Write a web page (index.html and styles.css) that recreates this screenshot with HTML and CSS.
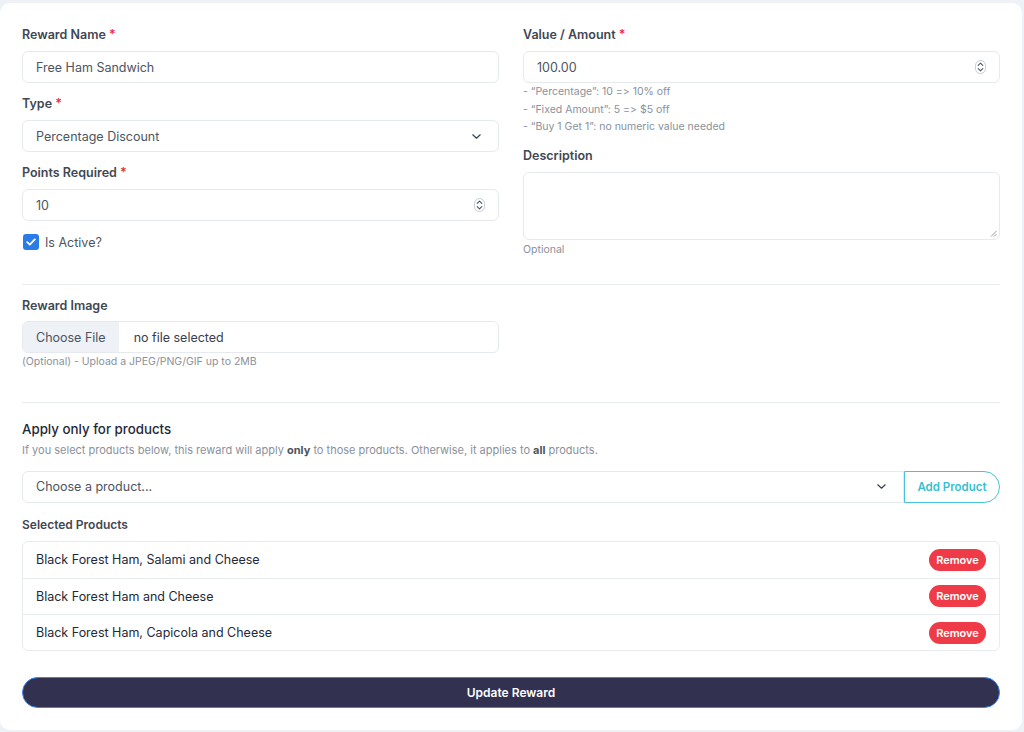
FILE: index.html
```html
<!DOCTYPE html>
<html lang="en">
<head>
<meta charset="utf-8">
<title>Edit Reward</title>
<link rel="stylesheet" href="styles.css">
</head>
<body>
<main class="card">
  <div class="grid">
    <div class="col">
      <div class="field">
        <label class="label">Reward Name <span class="req">*</span></label>
        <div class="input"><span class="value">Free Ham Sandwich</span></div>
      </div>
      <div class="field">
        <label class="label">Type <span class="req">*</span></label>
        <div class="input">
          <span class="value">Percentage Discount</span>
          <svg class="chev" width="9" height="5" viewBox="0 0 9 5"><path d="M0.8 0.8l3.7 3.4 3.7-3.4" fill="none" stroke="#374151" stroke-width="1.2" stroke-linecap="round" stroke-linejoin="round"/></svg>
        </div>
      </div>
      <div class="field">
        <label class="label">Points Required <span class="req">*</span></label>
        <div class="input">
          <span class="value">10</span>
          <svg class="spin" width="11" height="14" viewBox="0 0 11 14"><rect x="0.5" y="0.5" width="10" height="13" rx="5" fill="#fff" stroke="#c7ccd3"/><path d="M3.2 5.4l2.3-2.2 2.3 2.2M3.2 8.6l2.3 2.2 2.3-2.2" fill="none" stroke="#4b5563" stroke-width="1.1" stroke-linecap="round" stroke-linejoin="round"/></svg>
        </div>
      </div>
      <div class="check-row">
        <span class="checkbox"><svg width="10" height="8" viewBox="0 0 10 8"><path d="M1.2 4.2l2.6 2.4L8.8 1.4" fill="none" stroke="#fff" stroke-width="1.8" stroke-linecap="round" stroke-linejoin="round"/></svg></span>
        <span class="check-text">Is Active?</span>
      </div>
    </div>
    <div class="col">
      <div class="field field-tight">
        <label class="label">Value / Amount <span class="req">*</span></label>
        <div class="input">
          <span class="value">100.00</span>
          <svg class="spin" width="11" height="14" viewBox="0 0 11 14"><rect x="0.5" y="0.5" width="10" height="13" rx="5" fill="#fff" stroke="#c7ccd3"/><path d="M3.2 5.4l2.3-2.2 2.3 2.2M3.2 8.6l2.3 2.2 2.3-2.2" fill="none" stroke="#4b5563" stroke-width="1.1" stroke-linecap="round" stroke-linejoin="round"/></svg>
        </div>
        <div class="help">
          <div>- “Percentage”: 10 =&gt; 10% off</div>
          <div>- “Fixed Amount”: 5 =&gt; $5 off</div>
          <div>- “Buy 1 Get 1”: no numeric value needed</div>
        </div>
      </div>
      <div class="field">
        <label class="label">Description</label>
        <div class="textarea">
          <svg class="grip" width="7" height="7" viewBox="0 0 7 7"><path d="M6.5 1L1 6.5M6.5 4L4 6.5" stroke="#8a9099" stroke-width="0.9"/></svg>
        </div>
        <div class="help help-gap">Optional</div>
      </div>
    </div>
  </div>

  <hr class="rule rule-top">

  <section class="image-section">
    <label class="label">Reward Image</label>
    <div class="file-input">
      <span class="file-btn">Choose File</span>
      <span class="file-name">no file selected</span>
    </div>
    <div class="help">(Optional) - Upload a JPEG/PNG/GIF up to 2MB</div>
  </section>

  <hr class="rule rule-mid">

  <section class="products">
    <h2 class="heading">Apply only for products</h2>
    <p class="sub">If you select products below, this reward will apply <b>only</b> to those products. Otherwise, it applies to <b>all</b> products.</p>
    <div class="picker">
      <div class="input picker-select">
        <span class="value">Choose a product...</span>
        <svg class="chev" width="9" height="5" viewBox="0 0 9 5"><path d="M0.8 0.8l3.7 3.4 3.7-3.4" fill="none" stroke="#374151" stroke-width="1.2" stroke-linecap="round" stroke-linejoin="round"/></svg>
      </div>
      <button class="add-btn" type="button">Add Product</button>
    </div>
    <div class="label small-label">Selected Products</div>
    <ul class="list">
      <li class="item"><span>Black Forest Ham, Salami and Cheese</span><button class="remove" type="button">Remove</button></li>
      <li class="item"><span>Black Forest Ham and Cheese</span><button class="remove" type="button">Remove</button></li>
      <li class="item"><span>Black Forest Ham, Capicola and Cheese</span><button class="remove" type="button">Remove</button></li>
    </ul>
  </section>

  <button class="submit" type="button">Update Reward</button>
</main>
</body>
</html>
```

FILE: styles.css
```css
* { box-sizing: border-box; }

html, body {
  margin: 0;
  background: #eef2f6;
}

body {
  padding: 3px 2px 3px 0;
  font-family: Inter, "Open Sans", "Liberation Sans", sans-serif;
  font-variant-ligatures: none;
  font-feature-settings: "calt" 0, "liga" 0;
  color: #374151;
}

.card {
  background: #fff;
  border-radius: 10px;
  padding: 23px 22px 22px 22px;
  min-height: 726px;
}

.grid {
  display: grid;
  grid-template-columns: 1fr 1fr;
  column-gap: 24px;
}

.col { display: flex; flex-direction: column; }

.field { margin-bottom: 12px; }
.field-tight { margin-bottom: 11px; }

.label {
  display: block;
  font-size: 12.5px;
  font-weight: 600;
  line-height: 18px;
  color: #3f4754;
  margin-bottom: 7px;
}

.req { color: #ef2b3a; }

.input {
  height: 32px;
  border: 1px solid #e6e9ee;
  border-radius: 6px;
  background: #fff;
  display: flex;
  align-items: center;
  justify-content: space-between;
  padding: 0 13px;
  font-size: 12.5px;
  color: #4b5563;
}

.chev { margin-right: 4px; }

.check-row {
  display: flex;
  align-items: center;
  gap: 6px;
  margin-top: 1px;
}

.checkbox {
  width: 16px;
  height: 16px;
  border-radius: 3px;
  background: #2a7de8;
  display: flex;
  align-items: center;
  justify-content: center;
  margin-left: 1px;
}

.check-text {
  font-size: 12.5px;
  color: #4b5563;
}

.help {
  font-size: 10.5px;
  line-height: 17.5px;
  color: #8a919c;
}

.help-gap { margin-top: 1px; }

.textarea {
  height: 68px;
  border: 1px solid #e6e9ee;
  border-radius: 6px;
  position: relative;
}

.grip {
  position: absolute;
  right: 2px;
  bottom: 2px;
}

.rule {
  border: 0;
  border-top: 1px solid #e8ebef;
  margin: 0;
}

.rule-top { margin-top: 14px; }

.image-section { padding-top: 12px; }

.image-section .label { margin-bottom: 6px; }

.file-input {
  width: calc(50% - 12px);
  height: 32px;
  border: 1px solid #e6e9ee;
  border-radius: 6px;
  display: flex;
  align-items: center;
  overflow: hidden;
  font-size: 12.5px;
  color: #4b5563;
}

.file-btn {
  height: 100%;
  display: flex;
  align-items: center;
  padding: 0 13px;
  background: #eef1f5;
  color: #4b5563;
}

.file-name { padding-left: 15px; color: #374151; }

.rule-mid { margin-top: 31px; }

.products { padding-top: 16px; }

.heading {
  margin: 0;
  font-size: 13.3px;
  font-weight: 500;
  line-height: 20px;
  color: #1f2937;
}

.sub {
  margin: 3px 0 0;
  font-size: 11px;
  line-height: 17px;
  color: #8a919c;
}

.sub b { font-weight: 700; color: #4b5563; }

.picker {
  display: flex;
  margin-top: 12px;
}

.picker-select {
  flex: 1;
  border-radius: 6px 0 0 6px;
  color: #4b5563;
}

.add-btn {
  width: 96px;
  height: 32px;
  border: 1px solid #47c5d6;
  border-radius: 0 16px 16px 0;
  background: #fff;
  color: #38bfd0;
  font-family: inherit;
  font-size: 11.5px;
  font-weight: 600;
  padding: 0;
}

.small-label {
  margin-top: 13px;
  margin-bottom: 7px;
  font-size: 12px;
}

.list {
  list-style: none;
  margin: 0;
  padding: 0;
  border: 1px solid #e8ebef;
  border-radius: 6px;
}

.item {
  height: 36.3px;
  display: flex;
  align-items: center;
  justify-content: space-between;
  padding: 0 13px;
  font-size: 12.5px;
  color: #1f2937;
}

.item + .item { border-top: 1px solid #e8ebef; }

.remove {
  height: 22px;
  width: 57px;
  border: 0;
  border-radius: 11px;
  background: #ef3b47;
  color: #fff;
  font-family: inherit;
  font-size: 11px;
  font-weight: 600;
  padding: 0;
}

.submit {
  display: block;
  width: 100%;
  height: 31px;
  margin-top: 26px;
  border: 1px solid #3b82f6;
  border-radius: 16px;
  background: #32314f;
  color: #fff;
  font-family: inherit;
  font-size: 12px;
  font-weight: 600;
}
```
